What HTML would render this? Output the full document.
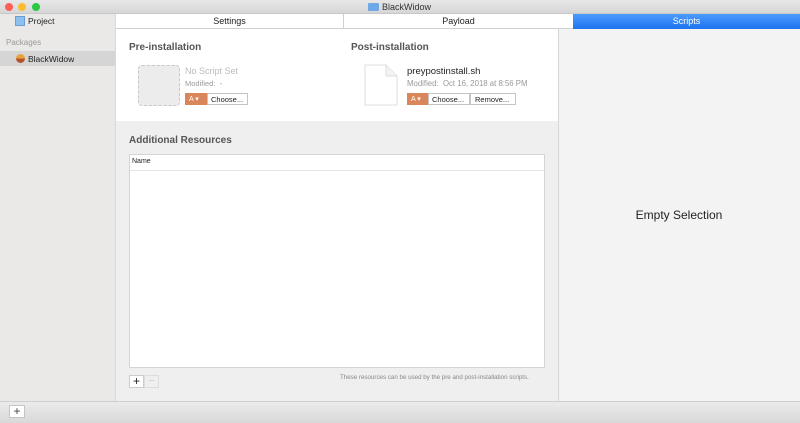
<!DOCTYPE html><html><head><style>
*{margin:0;padding:0;box-sizing:border-box}
body{width:800px;height:423px;overflow:hidden;font-family:"Liberation Sans",sans-serif;background:#ececec;position:relative;color:#222}
.a{position:absolute}
</style></head><body>
<div class="a" style="left:0;top:0;width:800px;height:14px;background:linear-gradient(#e8e8e8,#d6d6d6);border-bottom:1px solid #c8c8c8"></div>
<div class="a" style="left:5px;top:3px;width:8px;height:8px;border-radius:50%;background:#fc5f57"></div>
<div class="a" style="left:18px;top:3px;width:8px;height:8px;border-radius:50%;background:#fdbc2e"></div>
<div class="a" style="left:32px;top:3px;width:8px;height:8px;border-radius:50%;background:#28c840"></div>
<div class="a" style="left:368px;top:3px;width:11px;height:8px;background:#6fa8e6;border-radius:1px"></div>
<div class="a" style="left:382px;top:2px;font-size:9px;color:#333">BlackWidow</div>
<div class="a" style="left:0;top:14px;width:116px;height:387px;background:#eae9e8;border-right:1px solid #d8d8d8"></div>
<div class="a" style="left:15px;top:16px;width:10px;height:10px;background:#8fbfee;border:1px solid #6a9fd6"></div>
<div class="a" style="left:28px;top:16px;font-size:8.5px">Project</div>
<div class="a" style="left:6px;top:38px;font-size:8px;color:#999">Packages</div>
<div class="a" style="left:0;top:51px;width:115px;height:15px;background:#d6d5d5"></div>
<div class="a" style="left:16px;top:54px;width:9px;height:9px;border-radius:50%;background:linear-gradient(#e9a23a 50%,#b5542a 50%)"></div>
<div class="a" style="left:28px;top:54px;font-size:8.5px">BlackWidow</div>
<div class="a" style="left:116px;top:14px;width:684px;height:15px;background:#fff;border-bottom:1px solid #d0d0d0"></div>
<div class="a" style="left:343px;top:14px;width:1px;height:15px;background:#d0d0d0"></div>
<div class="a" style="left:116px;top:16px;width:227px;text-align:center;font-size:9px">Settings</div>
<div class="a" style="left:344px;top:16px;width:229px;text-align:center;font-size:9px">Payload</div>
<div class="a" style="left:573px;top:14px;width:227px;height:15px;background:linear-gradient(#4c9bfd,#1d73f0);color:#fff;text-align:center;font-size:9px;padding-top:2px">Scripts</div>
<div class="a" style="left:116px;top:29px;width:442px;height:92px;background:#fff"></div>
<div class="a" style="left:116px;top:121px;width:442px;height:280px;background:#efefef"></div>
<div class="a" style="left:558px;top:29px;width:242px;height:372px;background:#f3f3f3;border-left:1px solid #d6d6d6"></div>
<div class="a" style="left:558px;top:208px;width:242px;text-align:center;font-size:12px;color:#222">Empty Selection</div>
<div class="a" style="left:129px;top:42px;font-size:10px;font-weight:bold;color:#555">Pre-installation</div>
<div class="a" style="left:351px;top:42px;font-size:10px;font-weight:bold;color:#555">Post-installation</div>
<div class="a" style="left:138px;top:65px;width:42px;height:41px;border:1px dashed #c8c8c8;border-radius:4px;background:#ececec"></div>
<div class="a" style="left:185px;top:66px;font-size:9px;color:#bbb">No Script Set</div>
<div class="a" style="left:185px;top:79px;font-size:7.5px;color:#999">Modified:&nbsp; -</div>
<div class="a" style="left:185px;top:93px;width:22px;height:12px;background:#d9875a;color:#fff;font-size:7px;padding:2px 4px">A ▾</div>
<div class="a" style="left:207px;top:93px;width:41px;height:12px;background:#fff;border:1px solid #c4c4c4;font-size:7.5px;padding:1px 3px">Choose...</div>
<svg class="a" style="left:364px;top:64px" width="34" height="42"><path d="M1 1H22L33 12V41H1Z" fill="#fff" stroke="#ddd"/><path d="M22 1V12H33" fill="#f3f3f3" stroke="#ddd"/></svg>
<div class="a" style="left:407px;top:66px;font-size:9.5px;color:#222">preypostinstall.sh</div>
<div class="a" style="left:407px;top:79px;font-size:7.8px;color:#999">Modified:&nbsp; Oct 16, 2018 at 8:56 PM</div>
<div class="a" style="left:407px;top:93px;width:21px;height:12px;background:#d9875a;color:#fff;font-size:7px;padding:2px 4px">A ▾</div>
<div class="a" style="left:428px;top:93px;width:42px;height:12px;background:#fff;border:1px solid #c4c4c4;font-size:7.5px;padding:1px 3px">Choose...</div>
<div class="a" style="left:470px;top:93px;width:46px;height:12px;background:#fff;border:1px solid #c4c4c4;font-size:7.5px;padding:1px 4px">Remove...</div>
<div class="a" style="left:129px;top:135px;font-size:10px;font-weight:bold;color:#555">Additional Resources</div>
<div class="a" style="left:129px;top:154px;width:416px;height:214px;background:#fff;border:1px solid #d4d4d4"></div>
<div class="a" style="left:130px;top:170px;width:414px;height:1px;background:#e4e4e4"></div>
<div class="a" style="left:132px;top:158px;font-size:7px">Name</div>
<div class="a" style="left:129px;top:375px;width:15px;height:13px;background:#fff;border:1px solid #ccc;font-size:12px;line-height:11px;text-align:center">+</div>
<div class="a" style="left:144px;top:375px;width:15px;height:13px;border:1px solid #ddd;color:#ccc;font-size:11px;line-height:11px;text-align:center">−</div>
<div class="a" style="left:340px;top:374px;font-size:6.2px;color:#888">These resources can be used by the pre and post-installation scripts.</div>
<div class="a" style="left:0;top:401px;width:800px;height:22px;background:linear-gradient(#ebebeb,#d8d8d8);border-top:1px solid #cfcfcf"></div>
<div class="a" style="left:9px;top:405px;width:16px;height:13px;background:#fff;border:1px solid #c4c4c4;font-size:12px;line-height:11px;text-align:center;color:#444">+</div>
</body></html>
